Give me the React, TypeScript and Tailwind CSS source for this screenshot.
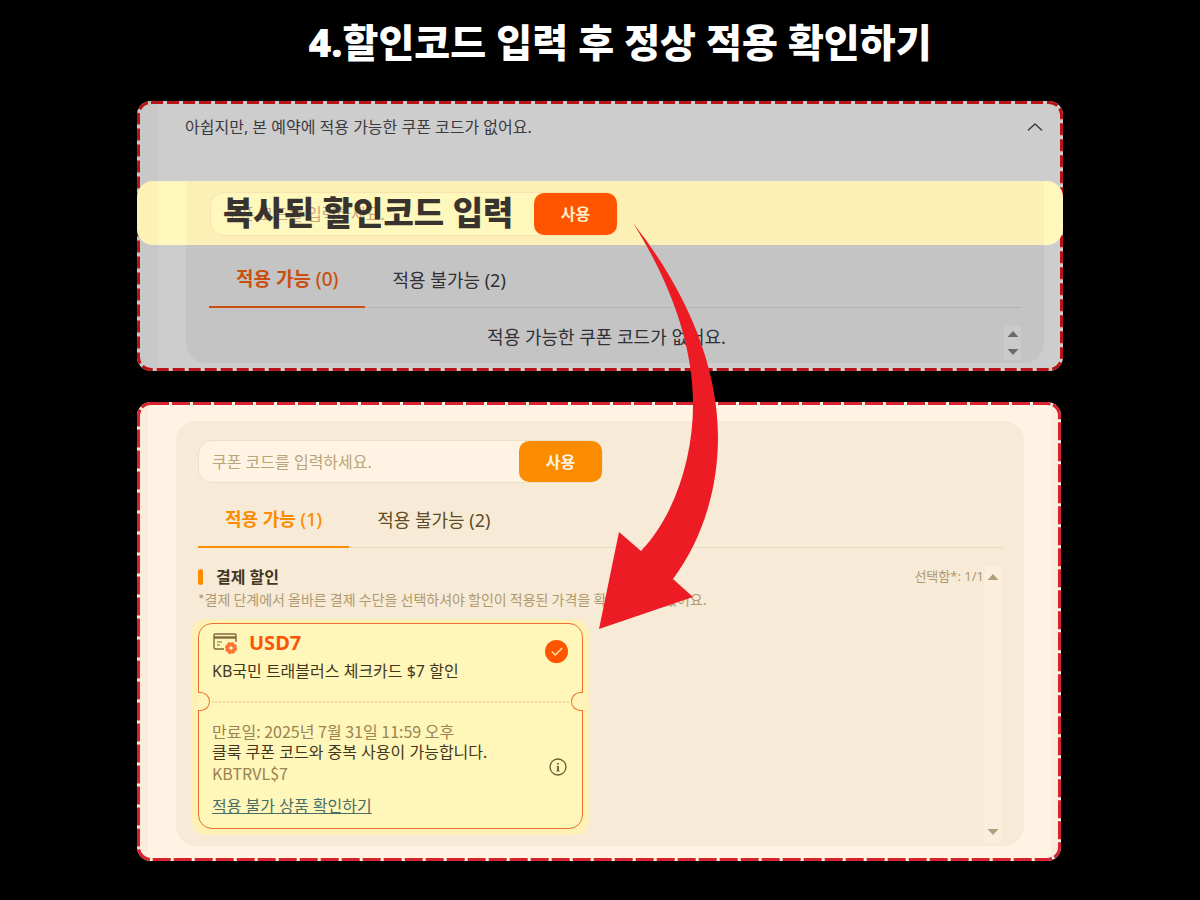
import { ChevronUp, Check } from "lucide-react";

const DashedFrame = ({ color, dash }: { color: string; dash: string }) => {
    return (
        <svg className="absolute inset-0 w-full h-full rounded-[14px] pointer-events-none" aria-hidden="true">
            <rect width="100%" height="100%" rx="14" fill="none" stroke={color} strokeWidth="6" strokeDasharray={dash} />
        </svg>
    );
};

const Triangle = ({ down = false }: { down?: boolean }) => {
    return (
        <svg width="12" height="6" viewBox="0 0 12 6" fill="currentColor" aria-hidden="true">
            <path d={down ? "M0.5 0h11L6 6z" : "M6 0l5.5 6H0.5z"} />
        </svg>
    );
};

const CardIcon = () => {
    return (
        <svg width="26" height="24" viewBox="0 0 26 24" fill="none" aria-hidden="true">
            <path d="M12 18H4a2 2 0 0 1-2-2V4a1 1 0 0 1 1-1h20a1 1 0 0 1 1 1v7" stroke="#85683c" strokeWidth="1.4" />
            <path d="M2 6.5h22" stroke="#85683c" strokeWidth="2.4" />
            <path d="M5 11h5M5 14h3" stroke="#85683c" strokeWidth="1.2" />
            <circle cx="19" cy="17" r="3.6" stroke="#ff7336" strokeWidth="3.6" />
            <circle cx="19" cy="17" r="5.4" stroke="#ff7336" strokeWidth="1.2" strokeDasharray="2.8 1.4" />
        </svg>
    );
};

const InfoIcon = () => {
    return (
        <svg width="20" height="20" viewBox="0 0 20 20" fill="none" stroke="currentColor" aria-hidden="true">
            <circle cx="10" cy="10" r="8" strokeWidth="1.3" />
            <path d="M10 9v5M10 6v1.6" strokeWidth="1.8" />
            <path d="M8.600 9.300H10M8.300 14h3.400" strokeWidth="0.8" />
        </svg>
    );
};

const EmptyPanel = () => {
    return (
        <section className="relative rounded-[14px] bg-[linear-gradient(to_right,#c8c8c8_21px,#cdcdcd_21px)] pb-2">
            <DashedFrame color="#b91414" dash="12 4" />
            <div className="flex justify-between items-start h-20 pt-[14px] pl-12 pr-4 text-[#3a3a40]">
                <p className="text-base">아쉽지만, 본 예약에 적용 가능한 쿠폰 코드가 없어요.</p>
                <button type="button" aria-label="접기">
                    <ChevronUp className="w-6 h-6 scale-x-110" strokeWidth={1.25} />
                </button>
            </div>

            <div className="relative z-10 rounded-2xl bg-[linear-gradient(to_right,#fef1b6_21px,#fff7bb_21px)]">
                <div className="ml-[49px] mr-[19px] pt-[11px] pb-[9px] pl-6 bg-[#fdf0b6]">
                    <form className="relative flex w-[408px] h-11 rounded-[14px] border border-[#fbe3b0] bg-[#fff8bd]">
                        <input
                            id="copied-code"
                            className="flex-1 min-w-0 pl-[14px] text-base placeholder:text-[#c9a77c] outline-none"
                            placeholder="쿠폰 코드를 입력하세요."
                        />
                        <button type="button" className="w-[83px] rounded-[10px] bg-[#ff5500] text-base font-bold text-[#ffecc0]">
                            사용
                        </button>
                        <label
                            htmlFor="copied-code"
                            className="absolute left-3 top-0 leading-[40px] text-[33px] font-black text-[#38332f] whitespace-nowrap"
                        >
                            복사된 할인코드 입력
                        </label>
                    </form>
                </div>
            </div>

            <div className="ml-[49px] mr-[19px] pl-[23px] pr-[22px] pb-0.5 rounded-b-[20px] bg-[#c4c4c4] text-lg text-[#303036]">
                <div className="flex border-b border-[#b4b4b4] leading-7">
                    <button
                        type="button"
                        className="-mb-px pl-[27px] pr-[26px] pt-5 pb-[13px] border-b-2 border-[#c9500f] text-[19px] font-bold text-[#c9500f]"
                    >
                        적용 가능 <span className="font-medium">(0)</span>
                    </button>
                    <button type="button" className="px-7 pt-5 pb-[13px]">
                        적용 불가능 (2)
                    </button>
                </div>
                <div className="flex items-center pt-[17px]">
                    <p className="flex-1 pb-3 leading-6 text-center">적용 가능한 쿠폰 코드가 없어요.</p>
                    <div className="flex flex-col items-center justify-between w-[17px] h-[34px] mr-px py-[5px] bg-[#cacaca] text-[#6a6a6a]">
                        <Triangle />
                        <Triangle down />
                    </div>
                </div>
            </div>
        </section>
    );
};

const CouponCard = () => {
    return (
        <div className="-ml-[6px] w-[397px] p-[6px] pt-1 rounded-[14px] bg-[#fff1b5]">
            <article className="relative h-[206px] px-[13px] rounded-[14px] border border-[#f0702c] bg-[#fff6ba] text-base leading-[21px] text-[#43361f]">
                <div className="flex items-center gap-[11px] pt-[7px]">
                    <CardIcon />
                    <h3 className="text-xl leading-6 font-bold text-[#fb5607]">USD7</h3>
                </div>
                <p className="pt-[6px]">KB국민 트래블러스 체크카드 $7 할인</p>
                <span className="absolute right-[14px] top-4 flex items-center justify-center w-[23px] h-[23px] rounded-full bg-[#ff5500] text-[#ffe6b0]">
                    <Check className="w-[14px] h-[14px]" strokeWidth={2.5} />
                </span>

                <div className="mt-[19px] border-t-2 border-dotted border-[#f7d49b]"></div>
                <span className="absolute -left-px top-[68px] w-3 h-[19px] rounded-r-full border border-l-0 border-[#f0702c] bg-[#fff4b9]"></span>
                <span className="absolute -right-px top-[68px] w-3 h-[19px] rounded-l-full border border-r-0 border-[#f0702c] bg-[#fff4b9]"></span>

                <p className="pt-[18px] font-['Noto_Sans_CJK_KR',sans-serif] text-[#9a8252]">만료일: 2025년 7월 31일 11:59 오후</p>
                <p>클룩 쿠폰 코드와 중복 사용이 가능합니다.</p>
                <p className="font-['Noto_Sans_CJK_KR',sans-serif] text-[#9a8252]">KBTRVL$7</p>
                <a href="#" className="inline-block mt-3 underline text-[#4a6e66]">
                    적용 불가 상품 확인하기
                </a>
                <button type="button" aria-label="쿠폰 정보" className="absolute right-[14px] top-[133px] text-[#6b5a34]">
                    <InfoIcon />
                </button>
            </article>
        </div>
    );
};

const AppliedPanel = () => {
    return (
        <section className="relative mr-0.5 pl-[39px] pr-[37px] pt-[19px] pb-[15px] rounded-[14px] bg-[linear-gradient(to_right,#f9eddb_11px,#fff3e3_11px,#fff3e3_calc(100%-10px),#f9eddb_calc(100%-10px))]">
            <DashedFrame color="#d9222f" dash="18 3" />
            <div className="pl-[22px] pr-[21px] pt-[19px] pb-[3px] rounded-[20px] bg-[#f7ead6]">
                <form className="flex w-[405px] h-[43px] rounded-[14px] border border-[#eedfc8] bg-[#fff3e3]">
                    <input
                        aria-label="쿠폰 코드"
                        className="flex-1 min-w-0 pl-[13px] text-base placeholder:text-[#b9a57c] outline-none"
                        placeholder="쿠폰 코드를 입력하세요."
                    />
                    <button type="button" className="w-[83px] rounded-[10px] bg-[#fb8c00] text-base font-bold text-[#fff3e3]">
                        사용
                    </button>
                </form>

                <div className="flex border-b border-[#e8dac3] text-lg leading-7 text-[#5f4c26]">
                    <button type="button" className="-mb-px px-[27px] pt-[22px] pb-[13px] border-b-2 border-[#fb8c00] font-bold text-[#fb8c00]">
                        적용 가능 <span className="font-medium">(1)</span>
                    </button>
                    <button type="button" className="px-7 pt-[22px] pb-[13px]">
                        적용 불가능 (2)
                    </button>
                </div>

                <div className="flex pt-[18px]">
                    <div className="flex-1 min-w-0 pb-2">
                        <div className="flex items-center gap-[13px] h-[22px]">
                            <span className="w-[5px] h-4 rounded-sm bg-[#fb8c00]"></span>
                            <h2 className="flex-1 text-base leading-[22px] font-bold text-[#43361f]">결제 할인</h2>
                            <span className="text-[13px] text-[#ae9a70]">선택함*: 1/1</span>
                        </div>
                        <p className="mb-[9px] leading-[22px] text-sm font-['Noto_Sans_CJK_KR',sans-serif] text-[#ae9a70]">
                            *결제 단계에서 올바른 결제 수단을 선택하셔야 할인이 적용된 가격을 확인하실 수 있어요.
                        </p>
                        <CouponCard />
                    </div>
                    <div className="flex flex-col items-center justify-between w-[17px] mr-0.5 pt-2 pb-2 bg-[#fbeedc] text-[#b0a07e]">
                        <Triangle />
                        <Triangle down />
                    </div>
                </div>
            </div>
        </section>
    );
};

export default function App() {
    return (
        <main className="min-h-screen bg-black px-4 pb-[38px] font-['Noto_Sans','Noto_Sans_CJK_KR',sans-serif]">
            <div className="relative w-full max-w-[926px] mx-auto">
                <h1 className="pt-4 pb-[33px] pl-10 text-center text-[39px] leading-[52px] font-black text-white">
                    4.할인코드 입력 후 정상 적용 확인하기
                </h1>
                <div className="flex flex-col gap-[31px]">
                    <EmptyPanel />
                    <AppliedPanel />
                </div>
                <svg
                    className="absolute z-20 left-[462px] top-[223px] pointer-events-none"
                    width="120"
                    height="407"
                    viewBox="599 223 120 407"
                    aria-hidden="true"
                >
                    <path
                        d="M633 223C686 290 718 365 718 437C718 490 702 540 673 579L693 597L599 629L619 532L641 551C676 514 694 455 693 400C692 345 672 285 633 223Z"
                        fill="#ed1c24"
                    />
                </svg>
            </div>
        </main>
    );
}
